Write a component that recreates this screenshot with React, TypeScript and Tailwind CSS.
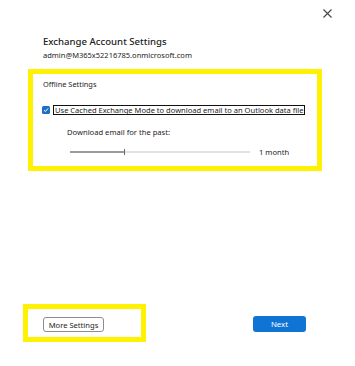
import React from "react";

export default function App() {
  const font = { fontFamily: '"Noto Sans", "Open Sans", sans-serif' };
  return (
    <div
      className="w-[355px] h-[366px] bg-white flex flex-col text-[#242424]"
      style={font}
    >
      {/* header with close */}
      <div className="h-[26px] flex justify-end items-center pr-[23px]">
        <svg width="9" height="9" viewBox="0 0 9 9" className="text-[#444]">
          <path d="M0.5 0.5 L8.5 8.5 M8.5 0.5 L0.5 8.5" stroke="currentColor" strokeWidth="1.1" />
        </svg>
      </div>

      <div className="pl-[43px] mt-[10px] text-[9.6px] leading-[12px] font-medium text-[#1b1b1b]">
        Exchange Account Settings
      </div>
      <div className="pl-[43px] mt-[2px] text-[7.5px] leading-[10px]">
        admin@M365x52216785.onmicrosoft.com
      </div>

      {/* Offline settings highlight */}
      <div className="ml-[28px] mt-[9px] w-[294px] h-[102px] border-[5px] border-[#fff200] flex flex-col">
        <div className="pl-[10px] pt-[5px] text-[7.4px] leading-[10px]">Offline Settings</div>
        <div className="flex items-center mt-[16px] pl-[9px]">
          <div className="w-[8px] h-[8px] rounded-[1.5px] bg-[#1f6fc9] flex items-center justify-center">
            <svg width="6" height="6" viewBox="0 0 6 6">
              <path d="M1 3.2 L2.4 4.5 L5 1.5" stroke="white" strokeWidth="1" fill="none" />
            </svg>
          </div>
          <div className="ml-[3px] border border-[#111] h-[10px] w-[252px] px-[1px] text-[7.55px] leading-[8px] whitespace-nowrap">
            Use Cached Exchange Mode to download email to an Outlook data file
          </div>
        </div>
        <div className="pl-[34px] mt-[12px] text-[7.6px] leading-[10px]">Download email for the past:</div>
        <div className="flex items-center mt-[10px] pl-[37px]">
          <div className="w-[180px] h-[6px] flex items-center">
            <div className="w-[54px] h-[1.5px] bg-[#9a9a9a]" />
            <div className="w-[1px] h-[6px] bg-[#6b6b6b]" />
            <div className="flex-1 h-[1.5px] bg-[#e2e2e2]" />
          </div>
          <div className="ml-[9px] text-[7.6px] leading-[10px]">1 month</div>
        </div>
      </div>

      <div className="flex-1" />

      {/* bottom row */}
      <div className="flex items-center mb-[24px]">
        <div className="ml-[23px] w-[123px] h-[38px] border-[5px] border-[#fff200] pl-[15px] pt-[8px]">
          <div className="w-[61px] h-[15px] border border-[#8d8d8d] rounded-[3px] flex items-center justify-center text-[7.6px] leading-[10px] whitespace-nowrap">
            More Settings
          </div>
        </div>
        <div className="ml-auto mr-[49px] mt-[2px] w-[53px] h-[16px] rounded-[3px] bg-[#0f74d3] text-white flex items-center justify-center text-[7.8px] leading-[10px]">
          Next
        </div>
      </div>
    </div>
  );
}
